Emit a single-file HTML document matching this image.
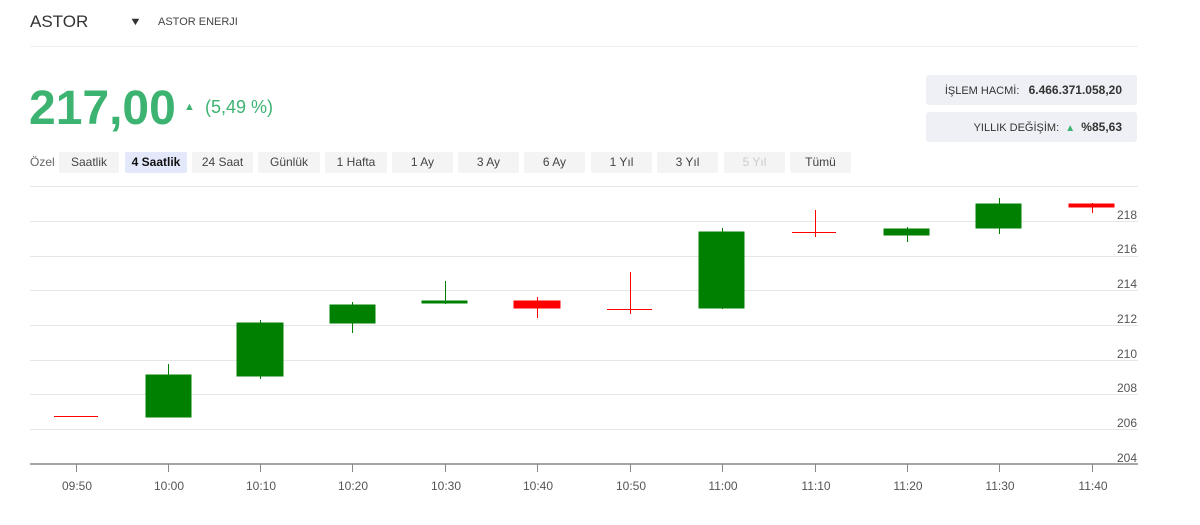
<!DOCTYPE html>
<html><head><meta charset="utf-8"><style>
body{margin:0;width:1200px;height:525px;background:#fff;font-family:"Liberation Sans",sans-serif;position:relative;overflow:hidden;color:#333}
.a{position:absolute;white-space:nowrap}
.btn{position:absolute;top:152px;height:21px;background:#f4f4f5;font-size:12px;color:#444;text-align:center;line-height:21px;border-radius:2px}
.box{position:absolute;left:926px;width:211px;height:30px;background:#eef0f5;border-radius:3px;font-size:11px;line-height:30px;text-align:right;box-sizing:border-box;padding-right:15px;color:#333}
</style></head><body>
<div class="a" style="left:30px;top:12px;font-size:17px;color:#333">ASTOR</div>
<div class="a" style="left:130px;top:16px;font-size:11px;color:#333;transform:scaleX(1.2)">&#9660;</div>
<div class="a" style="left:158px;top:16px;font-size:11px;color:#444">ASTOR ENERJI</div>
<div class="a" style="left:30px;top:46px;width:1108px;height:1px;background:#eee"></div>
<div class="a" style="left:29px;top:81px;font-size:48px;font-weight:bold;color:#3cb371;letter-spacing:0px">217,00</div>
<div class="a" style="left:184px;top:101px;font-size:11px;color:#3cb371">&#9650;</div>
<div class="a" style="left:205px;top:97px;font-size:18px;color:#3cb371">(5,49 %)</div>
<div class="box" style="top:75px">İŞLEM HACMİ: &nbsp;&nbsp;<b style="font-size:12px">6.466.371.058,20</b></div>
<div class="box" style="top:112px">YILLIK DEĞİŞİM: &nbsp;<span style="color:#3cb371;font-size:10px">&#9650;</span>&nbsp; <b style="font-size:12px">%85,63</b></div>
<div class="a" style="left:30px;top:155px;font-size:12px;color:#666">Özel</div>
<div class="btn" style="left:59px;width:60px">Saatlik</div>
<div class="btn" style="left:125px;width:62px;background:#e4e8fb;font-weight:bold;color:#111">4 Saatlik</div>
<div class="btn" style="left:192px;width:61px">24 Saat</div>
<div class="btn" style="left:258px;width:62px">Günlük</div>
<div class="btn" style="left:325px;width:62px">1 Hafta</div>
<div class="btn" style="left:392px;width:61px">1 Ay</div>
<div class="btn" style="left:458px;width:61px">3 Ay</div>
<div class="btn" style="left:524px;width:61px">6 Ay</div>
<div class="btn" style="left:591px;width:61px">1 Yıl</div>
<div class="btn" style="left:657px;width:61px">3 Yıl</div>
<div class="btn" style="left:724px;width:61px;color:#ccc">5 Yıl</div>
<div class="btn" style="left:790px;width:61px">Tümü</div>
<svg class="a" style="left:0;top:0" width="1200" height="525" font-family="Liberation Sans" font-size="12" fill="#555">
<g stroke="#e6e6e6" stroke-width="1">
<line x1="30" x2="1138" y1="186.5" y2="186.5"/><line x1="30" x2="1138" y1="221.5" y2="221.5"/><line x1="30" x2="1138" y1="256.5" y2="256.5"/><line x1="30" x2="1138" y1="290.5" y2="290.5"/><line x1="30" x2="1138" y1="325.5" y2="325.5"/><line x1="30" x2="1138" y1="360.5" y2="360.5"/><line x1="30" x2="1138" y1="394.5" y2="394.5"/><line x1="30" x2="1138" y1="429.5" y2="429.5"/>
</g>
<line x1="30" x2="1138" y1="464" y2="464" stroke="#888" stroke-width="1.5"/>
<g stroke="#888"><line x1="76.5" x2="76.5" y1="464" y2="472"/><line x1="168.5" x2="168.5" y1="464" y2="472"/><line x1="260.5" x2="260.5" y1="464" y2="472"/><line x1="352.5" x2="352.5" y1="464" y2="472"/><line x1="445.5" x2="445.5" y1="464" y2="472"/><line x1="537.5" x2="537.5" y1="464" y2="472"/><line x1="630.5" x2="630.5" y1="464" y2="472"/><line x1="722.5" x2="722.5" y1="464" y2="472"/><line x1="815.5" x2="815.5" y1="464" y2="472"/><line x1="907.5" x2="907.5" y1="464" y2="472"/><line x1="999.5" x2="999.5" y1="464" y2="472"/><line x1="1092.5" x2="1092.5" y1="464" y2="472"/></g>
<g text-anchor="middle"><text x="77" y="490">09:50</text><text x="169" y="490">10:00</text><text x="261" y="490">10:10</text><text x="353" y="490">10:20</text><text x="446" y="490">10:30</text><text x="538" y="490">10:40</text><text x="631" y="490">10:50</text><text x="723" y="490">11:00</text><text x="816" y="490">11:10</text><text x="908" y="490">11:20</text><text x="1000" y="490">11:30</text><text x="1093" y="490">11:40</text></g>
<g><text x="1117" y="219">218</text><text x="1117" y="253">216</text><text x="1117" y="288">214</text><text x="1117" y="323">212</text><text x="1117" y="358">210</text><text x="1117" y="392">208</text><text x="1117" y="427">206</text><text x="1117" y="462">204</text></g>
<g stroke="#008000" fill="#008000">
<line x1="168.5" x2="168.5" y1="364" y2="417"/><rect x="146" y="375" width="45" height="42"/>
<line x1="260.5" x2="260.5" y1="320" y2="379"/><rect x="237" y="323" width="46" height="53"/>
<line x1="352.5" x2="352.5" y1="302" y2="333"/><rect x="330" y="305" width="45" height="18"/>
<line x1="445.5" x2="445.5" y1="281" y2="304"/><rect x="422" y="301" width="45" height="2"/>
<line x1="722.5" x2="722.5" y1="228" y2="309"/><rect x="699" y="232" width="45" height="76"/>
<line x1="907.5" x2="907.5" y1="227" y2="242"/><rect x="884" y="229" width="45" height="6"/>
<line x1="999.5" x2="999.5" y1="198" y2="234"/><rect x="976" y="204" width="45" height="24"/>
</g>
<g stroke="#f00" fill="#f00">
<line x1="54" x2="98" y1="416.5" y2="416.5"/>
<line x1="537.5" x2="537.5" y1="297" y2="318"/><rect x="514" y="301" width="46" height="7"/>
<line x1="630.5" x2="630.5" y1="272" y2="314"/><line x1="607" x2="652" y1="309.5" y2="309.5"/>
<line x1="815.5" x2="815.5" y1="210" y2="237"/><line x1="792" x2="836" y1="232.5" y2="232.5"/>
<line x1="1092.5" x2="1092.5" y1="203" y2="213"/><rect x="1069" y="204" width="45" height="3"/>
</g>
</svg>
</body></html>
